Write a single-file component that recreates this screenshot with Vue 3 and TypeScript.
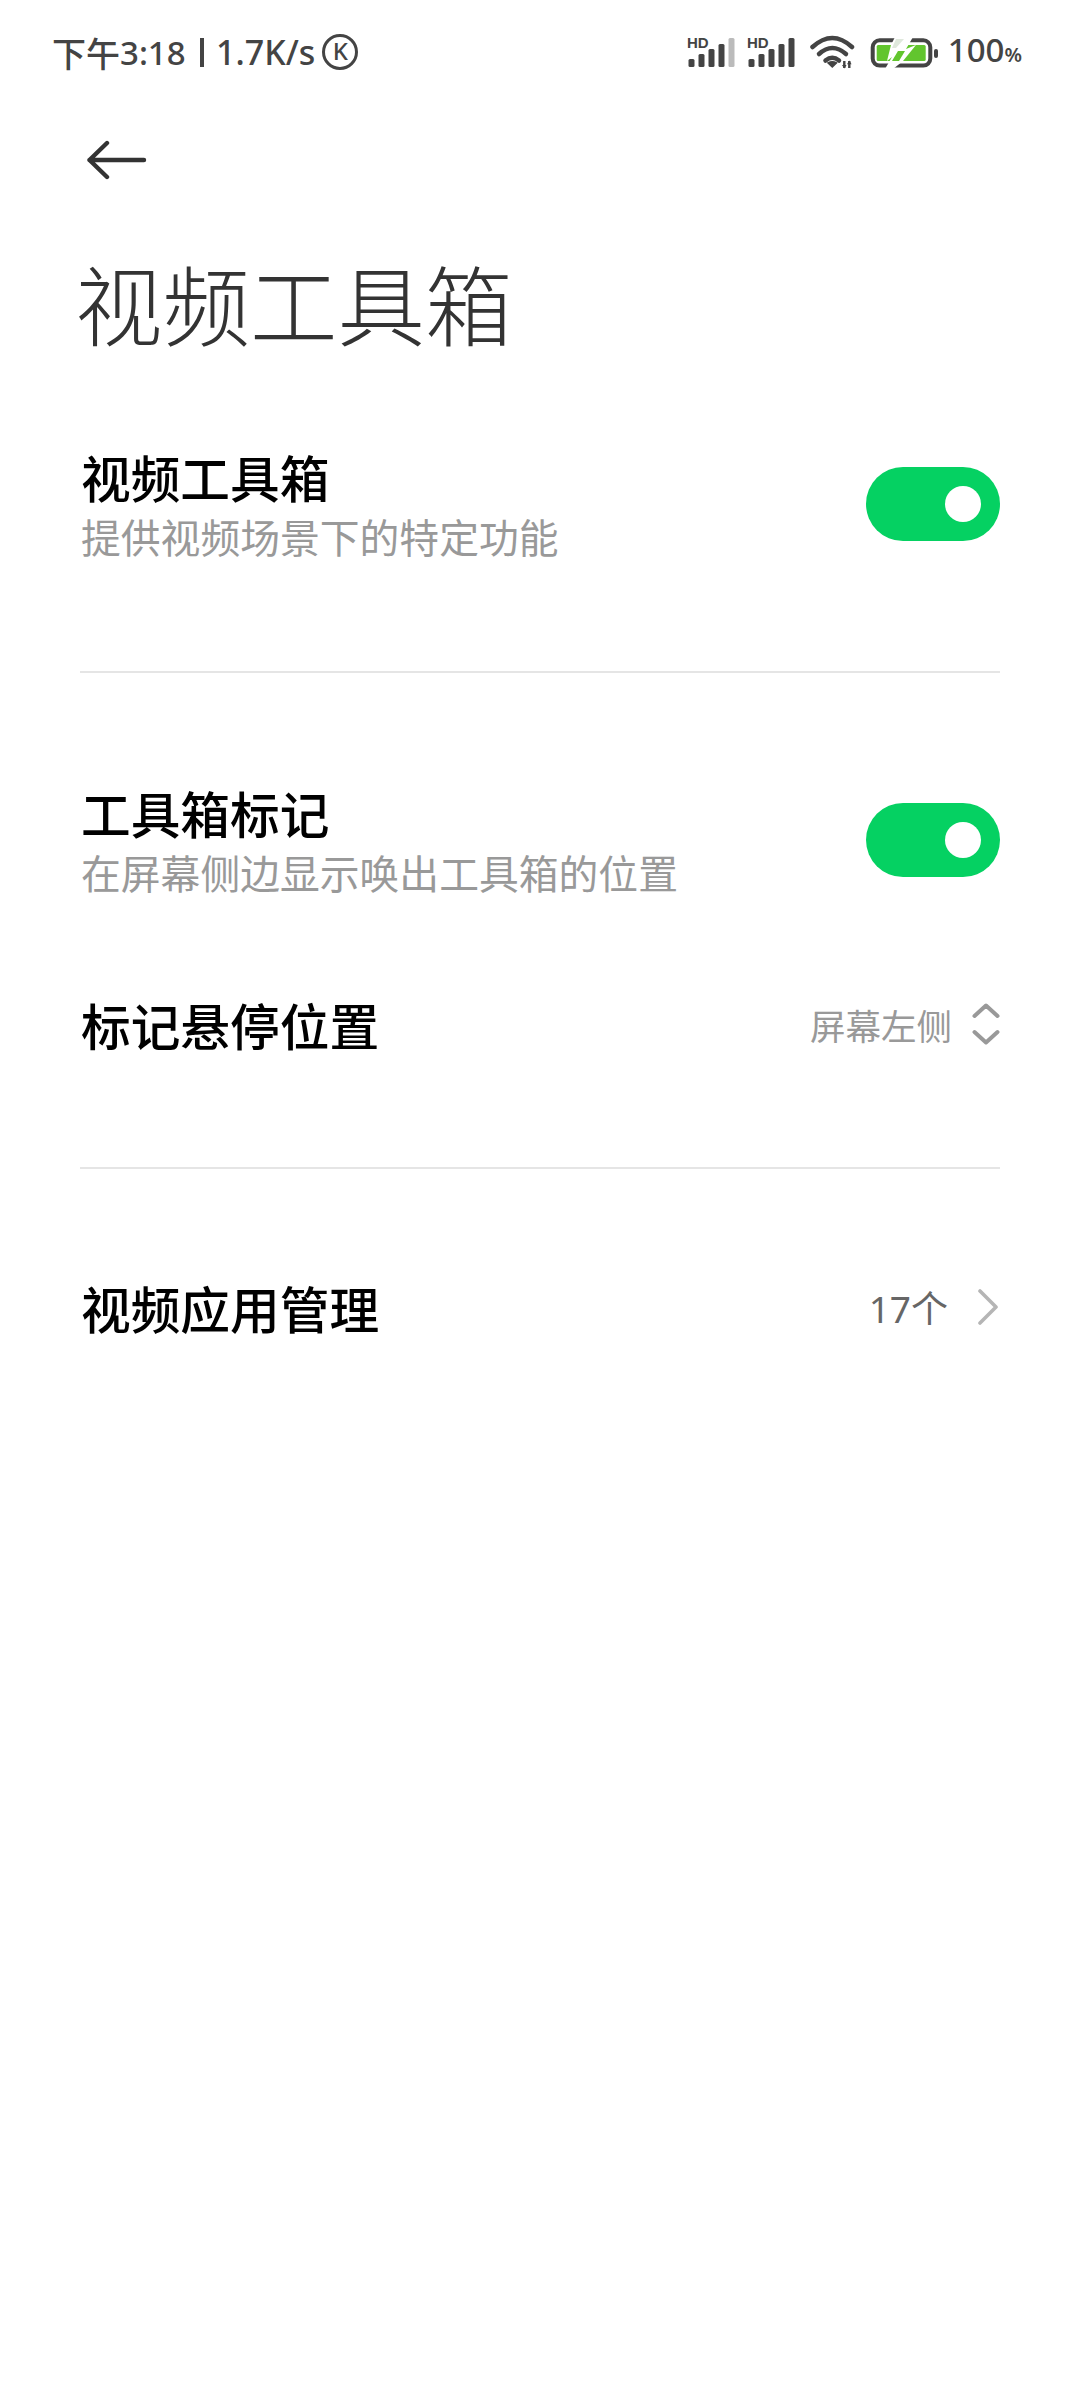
<script setup lang="ts">
const signalBars = [
  { x: 2.5, h: 8 },
  { x: 12.5, h: 13 },
  { x: 22.5, h: 18 },
  { x: 32.5, h: 23 },
];
</script>

<template>
  <div class="page">
    <div class="status-bar">
      <div class="status-left">
        <span class="status-time">下午</span>
        <span class="status-clock">3:18</span>
        <span class="status-sep"></span>
        <span class="status-speed">1.7K/s</span>
        <span class="k-badge">K</span>
      </div>
      <div class="status-right">
        <svg class="signal" width="50" height="32" viewBox="0 0 50 32">
          <text x="1" y="11.5" class="hd">HD</text>
          <rect v-for="b in signalBars" :key="b.x" :x="b.x" :y="31 - b.h" width="6" :height="b.h" rx="1.5" fill="#444" />
          <rect x="42.5" y="2" width="6" height="29" rx="1.5" fill="#bbb" />
        </svg>
        <svg class="signal signal-two" width="50" height="32" viewBox="0 0 50 32">
          <text x="1" y="11.5" class="hd">HD</text>
          <rect v-for="b in signalBars" :key="b.x" :x="b.x" :y="31 - b.h" width="6" :height="b.h" rx="1.5" fill="#444" />
          <rect x="42.5" y="2" width="6" height="29" rx="1.5" fill="#444" />
        </svg>
        <svg class="wifi" width="48" height="36" viewBox="0 0 48 36" fill="none" stroke="#444" stroke-width="4.5" stroke-linecap="round">
          <path d="M3.5 13 Q23.3 -5 43 13" />
          <path d="M10 20 Q23.3 8 37 20" />
          <path d="M16.5 26.5 Q23.3 21 30 26.5" />
          <path d="M19 29 Q23.3 26.5 27.5 29 L23.3 33 Z" fill="#444" stroke-width="1.5" />
          <path d="M35.3 27 V34 M40.3 27 V34" stroke-width="2.4" stroke-linecap="butt" />
          <path d="M33 31 H37.6 L35.3 34.5 Z M38 30.2 H42.6 L40.3 26.6 Z" fill="#444" stroke="none" />
        </svg>
        <svg class="battery" width="70" height="32" viewBox="0 0 70 32">
          <rect x="3.7" y="4.3" width="57.6" height="25.3" rx="7" fill="none" stroke="#444" stroke-width="4" />
          <rect x="7.7" y="9" width="49" height="16" rx="1.5" fill="#62c52e" />
          <path d="M26 1 H44 L37 13 L47 9 L34 25 L24 33 H16 L23 21 L18 25 L22 9 Z" fill="#fff" />
          <path d="M27 3 H35 L27 12 H23 Z" fill="#dfe8dc" />
          <path d="M29 15 H36 L30 25 H23 Z" fill="#62c52e" />
          <rect x="65" y="13" width="4" height="9" rx="2" fill="#444" />
        </svg>
        <span class="battery-text">100<small>%</small></span>
      </div>
    </div>

    <div class="nav">
      <svg width="60" height="42" viewBox="0 0 60 42" fill="none" stroke="#333" stroke-width="4.4" stroke-linecap="round" stroke-linejoin="round">
        <path d="M2.5 21 H57 M20 4 L2.5 21 L20 38" />
      </svg>
    </div>

    <h1 class="page-title">视频工具箱</h1>

    <section class="group group-first">
      <div class="row">
        <div class="row-text">
          <div class="row-title">视频工具箱</div>
          <div class="row-sub">提供视频场景下的特定功能</div>
        </div>
        <div class="switch"><span class="knob"></span></div>
      </div>
    </section>

    <section class="group group-second">
      <div class="row">
        <div class="row-text">
          <div class="row-title">工具箱标记</div>
          <div class="row-sub">在屏幕侧边显示唤出工具箱的位置</div>
        </div>
        <div class="switch"><span class="knob"></span></div>
      </div>
      <div class="row row-select">
        <div class="row-title">标记悬停位置</div>
        <div class="row-value">
          <span class="value-light">屏幕左侧</span>
          <svg width="28" height="42" viewBox="0 0 28 42" fill="none" stroke="#999" stroke-width="4" stroke-linecap="round" stroke-linejoin="round">
            <path d="M2.5 13 L14 2.5 L25.5 13 M2.5 29 L14 39.5 L25.5 29" />
          </svg>
        </div>
      </div>
    </section>

    <section class="group group-third">
      <div class="row row-link">
        <div class="row-title">视频应用管理</div>
        <div class="row-value">
          <span class="value-dark">17个</span>
          <svg class="chevron" width="20" height="36" viewBox="0 0 20 36" fill="none" stroke="#b5b5b5" stroke-width="3.6" stroke-linecap="round" stroke-linejoin="round">
            <path d="M2 2 L18 18 L2 34" />
          </svg>
        </div>
      </div>
    </section>
  </div>
</template>

<style>
html, body {
  margin: 0;
  background: #fff;
}
</style>

<style scoped>
.page {
  width: 1080px;
  height: 2400px;
  background: #fff;
  overflow: hidden;
  font-family: "Noto Sans CJK SC", "Noto Sans", sans-serif;
}

.status-bar {
  height: 72px;
  padding: 32px 58px 0 52px;
  box-sizing: border-box;
  display: flex;
  justify-content: space-between;
  align-items: flex-start;
  color: #444;
}

.status-left {
  display: flex;
  align-items: center;
  height: 40px;
  font-size: 34px;
  font-weight: 500;
  font-family: "Noto Sans", "Noto Sans CJK SC", sans-serif;
}

.status-time {
  font-family: "Noto Sans CJK SC", sans-serif;
  font-size: 34px;
}

.status-clock {
  font-size: 33px;
}

.status-sep {
  width: 4.5px;
  height: 29px;
  background: #444;
  margin: 0 12px 0 14px;
}

.k-badge {
  width: 36px;
  height: 36px;
  box-sizing: border-box;
  margin-left: 7px;
  border: 3.5px solid #444;
  border-radius: 50%;
  font-size: 24px;
  font-weight: 500;
  line-height: 28px;
  text-align: center;
}

.status-right {
  display: flex;
  align-items: center;
  height: 40px;
}

.signal {
  margin-right: 10px;
  overflow: visible;
}

.signal-two {
  margin-right: 13px;
}

.hd {
  font-family: "Liberation Sans", sans-serif;
  font-size: 15px;
  font-weight: 700;
  fill: #444;
}

.wifi {
  margin-right: 12px;
}

.battery-text {
  margin-left: 9px;
  font-family: "Noto Sans", sans-serif;
  font-size: 33px;
  font-weight: 500;
  line-height: 40px;
  color: #444;
}

.battery-text small {
  font-size: 20px;
  font-weight: 600;
}

.nav {
  height: 162px;
  padding: 67px 0 0 87px;
  box-sizing: border-box;
}

.page-title {
  margin: 0;
  padding-left: 75px;
  font-size: 87.5px;
  font-weight: 300;
  line-height: 136px;
  color: #333;
}

.row {
  display: flex;
  justify-content: space-between;
  align-items: center;
}

.group {
  margin: 0 80px;
  box-sizing: border-box;
}

.group-first {
  margin-top: 76px;
  height: 227px;
  border-bottom: 2px solid #e5e5e5;
}

.group-second {
  padding-top: 109px;
  height: 496px;
  border-bottom: 2px solid #e5e5e5;
}

.group-third {
  padding-top: 96px;
}

.row-text {
  display: flex;
  flex-direction: column;
}

.row-title {
  padding-left: 1px;
  font-size: 49.7px;
  font-weight: 500;
  line-height: 60px;
  color: #000;
}

.row-sub {
  padding-left: 1px;
  font-size: 39.8px;
  line-height: 60px;
  color: #999;
}

.row-select {
  margin-top: 92px;
  height: 60px;
}

.row-link {
  height: 84px;
}

.row-value {
  display: flex;
  align-items: center;
}

.value-light {
  font-size: 35.5px;
  color: #999;
  margin-right: 20px;
}

.value-dark {
  font-family: "Noto Sans", "Noto Sans CJK SC", sans-serif;
  font-size: 37px;
  color: #666;
  margin-right: 30px;
}

.chevron {
  margin-right: 2px;
}

.switch {
  width: 134px;
  height: 74px;
  margin-bottom: 4px;
  border-radius: 37px;
  background: #05d162;
  display: flex;
  align-items: center;
  justify-content: flex-end;
  padding-right: 19px;
  box-sizing: border-box;
}

.knob {
  width: 36px;
  height: 36px;
  border-radius: 50%;
  background: #fff;
}
</style>
